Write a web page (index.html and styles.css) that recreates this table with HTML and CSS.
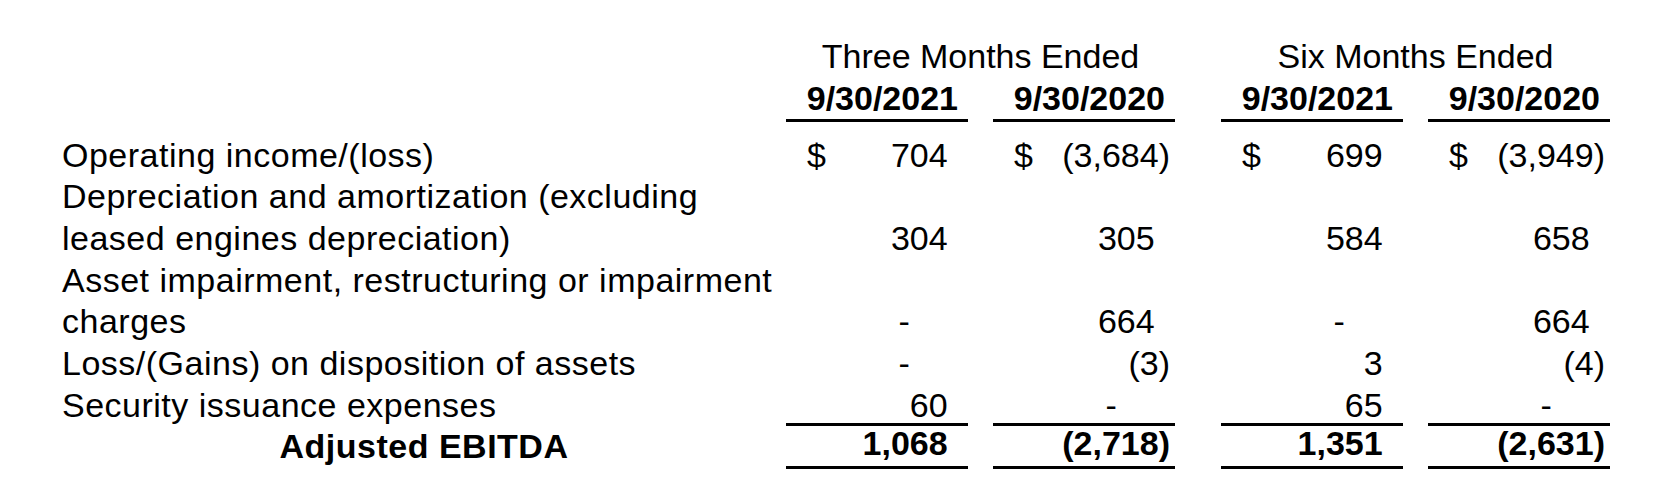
FILE: index.html
```html
<!DOCTYPE html>
<html lang="en">
<head>
<meta charset="utf-8">
<title>Adjusted EBITDA</title>
<link rel="stylesheet" href="styles.css">
</head>
<body>
<div class="report">
  <div class="row head1">
    <div class="lbl"></div>
    <div class="period">Three Months Ended</div>
    <div class="period second">Six Months Ended</div>
  </div>
  <div class="row head2">
    <div class="lbl"></div>
    <div class="c c1 date">9/30/2021</div>
    <div class="c c2 date">9/30/2020</div>
    <div class="c c3 date">9/30/2021</div>
    <div class="c c4 date">9/30/2020</div>
  </div>

  <div class="row first">
    <div class="lbl">Operating income/(loss)</div>
    <div class="c c1 num"><span class="cur">$</span><span class="pos">704</span></div>
    <div class="c c2 num"><span class="cur">$</span><span>(3,684)</span></div>
    <div class="c c3 num"><span class="cur">$</span><span class="pos">699</span></div>
    <div class="c c4 num"><span class="cur">$</span><span>(3,949)</span></div>
  </div>
  <div class="row">
    <div class="lbl">Depreciation and amortization (excluding<br>leased engines depreciation)</div>
    <div class="c c1 num"><span class="pos">304</span></div>
    <div class="c c2 num"><span class="pos">305</span></div>
    <div class="c c3 num"><span class="pos">584</span></div>
    <div class="c c4 num"><span class="pos">658</span></div>
  </div>
  <div class="row">
    <div class="lbl">Asset impairment, restructuring or impairment<br>charges</div>
    <div class="c c1 num"><span class="dash">-</span></div>
    <div class="c c2 num"><span class="pos">664</span></div>
    <div class="c c3 num"><span class="dash">-</span></div>
    <div class="c c4 num"><span class="pos">664</span></div>
  </div>
  <div class="row">
    <div class="lbl">Loss/(Gains) on disposition of assets</div>
    <div class="c c1 num"><span class="dash">-</span></div>
    <div class="c c2 num"><span>(3)</span></div>
    <div class="c c3 num"><span class="pos">3</span></div>
    <div class="c c4 num"><span>(4)</span></div>
  </div>
  <div class="row">
    <div class="lbl">Security issuance expenses</div>
    <div class="c c1 num"><span class="pos">60</span></div>
    <div class="c c2 num"><span class="dash">-</span></div>
    <div class="c c3 num"><span class="pos">65</span></div>
    <div class="c c4 num"><span class="dash">-</span></div>
  </div>
  <div class="row total">
    <div class="lbl">Adjusted EBITDA</div>
    <div class="c c1 num"><span class="pos">1,068</span></div>
    <div class="c c2 num"><span>(2,718)</span></div>
    <div class="c c3 num"><span class="pos">1,351</span></div>
    <div class="c c4 num"><span>(2,631)</span></div>
  </div>
</div>
</body>
</html>
```

FILE: styles.css
```css
html, body {
  margin: 0;
  padding: 0;
  background: #ffffff;
}

body {
  color: #000000;
  font-family: "Liberation Sans", Arial, sans-serif;
  font-size: 34px;
}

.report {
  padding: 36px 0 0 62px;
}

.row {
  display: flex;
  align-items: flex-end;
  line-height: 41.7px;
}

.lbl {
  width: 724px;
  flex: none;
  letter-spacing: 0.5px;
}

.period {
  width: 389px;
  flex: none;
  text-align: center;
}

.period.second {
  margin-left: 46px;
}

.c {
  width: 182px;
  flex: none;
  box-sizing: border-box;
}

.c2,
.c4 {
  margin-left: 25px;
}

.c3 {
  margin-left: 46px;
}

.head1 {
  line-height: 41.5px;
}

.head2 {
  line-height: 41px;
}

.date {
  font-weight: bold;
  text-align: right;
  padding-right: 10px;
  border-bottom: 3px solid #000;
}

.first {
  margin-top: 13px;
}

.num {
  display: flex;
  justify-content: space-between;
  padding: 0 5px 0 21px;
}

.num span:last-child {
  margin-left: auto;
}

.pos {
  padding-right: calc(0.333em + 4px);
}

.dash {
  padding-right: calc(1.445em + 4px);
}

.total {
  margin-top: -3px;
  line-height: 34px;
  font-weight: bold;
}

.total .lbl {
  text-align: center;
  padding-bottom: 6px;
}

.total .c {
  border-top: 3px solid #000;
  border-bottom: 3px solid #000;
  padding-bottom: 6px;
}
```
